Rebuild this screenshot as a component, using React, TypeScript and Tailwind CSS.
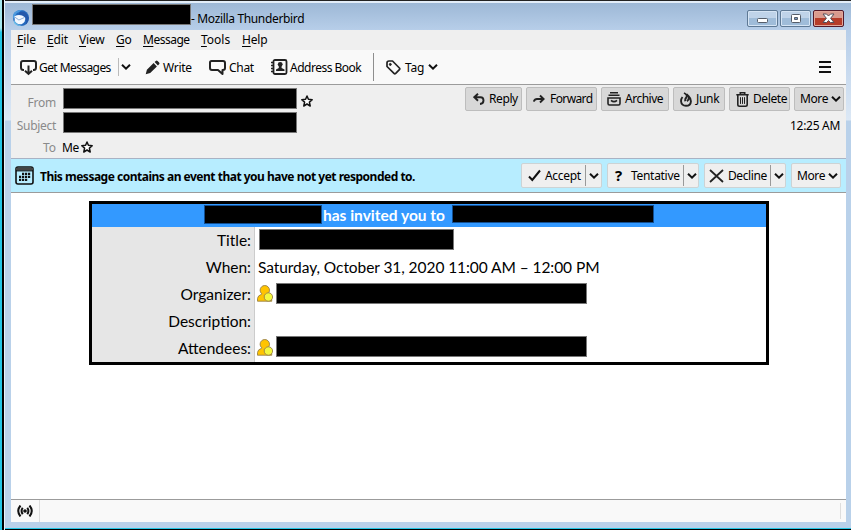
import React from "react";

function Label({ w, c = "", children }: { w: string; c?: string; children: React.ReactNode }) {
  return <span className={`block shrink-0 whitespace-nowrap ${w} ${c}`}>{children}</span>;
}

function Redacted({ c }: { c: string }) {
  return <span className={`block shrink-0 border border-[#777] bg-black ${c}`} />;
}

function Chevron({ c = "" }: { c?: string }) {
  return (
    <svg className={`shrink-0 ${c}`} width="10" height="8" viewBox="0 0 10 8" fill="none" stroke="#111" strokeWidth="2">
      <path d="M1 1.8 5 5.6 9 1.8" />
    </svg>
  );
}

function Star({ c = "" }: { c?: string }) {
  return (
    <svg className={`shrink-0 ${c}`} width="12" height="12" viewBox="0 0 12 12" fill="#fff" stroke="#111" strokeWidth="1.5" strokeLinejoin="round">
      <path d="M6 1 7.4 4.3 11.2 4.7 8.4 7.1 9.2 11 6 9 2.8 11 3.6 7.1.8 4.7 4.6 4.3Z" />
    </svg>
  );
}

function Contact() {
  return (
    <svg className="shrink-0" width="16" height="17" viewBox="0 0 16 17" stroke="#98814a" strokeWidth=".9">
      <path d="M.5 16.2V13.5Q.8 10.5 4.5 9.3H11Q14.5 10.5 14.8 16.2Z" fill="#ffc400" />
      <circle cx="7.8" cy="5.2" r="4.7" fill="#ffc400" />
      <path d="M5 9.3H10.6" stroke="#ffc400" strokeWidth="1.6" />
      <circle cx="11.4" cy="12" r="4.2" fill="#f3f83f" />
    </svg>
  );
}

function Thunderbird() {
  return (
    <svg className="ml-[2px] shrink-0" width="18" height="18" viewBox="0 0 18 18">
      <circle cx="9" cy="9" r="8" fill="#2469bd" />
      <path d="M1 10Q0 4 4.5 2Q8 .2 11 1.4Q8 1.3 7 3.2Q3.5 4 3 8Z" fill="#4c9adf" />
      <path d="M2.5 7.2Q8 4.5 13.2 8.2Q14 13 9.5 15.2Q5 15.8 2.8 12.2Z" fill="#f3f8ff" />
      <path d="M3 8.2 6.9 11 12.6 8.4" fill="none" stroke="#8fb0d8" />
      <path d="M7 3.8Q10 1.8 14 4L16.7 8.5Q16.5 13.5 13.5 15.7Q15 11 13.1 8.2Q10.5 5.2 7 5.4Z" fill="#2458aa" />
      <path d="M2 11Q4.5 16 10 16.5Q5 18 2 14Z" fill="#67bce9" />
    </svg>
  );
}

function TitleBar() {
  const btn = "flex h-[17px] items-center justify-center rounded-[2px] border border-[#5e7995] shadow-[inset_0_0_0_1px_#d5e4f4]";
  return (
    <div className="flex h-[27px] shrink-0 bg-linear-to-b from-[#9db8d6] to-[#b7cee9] pl-[5px] text-[12px]">
      <div className="flex pt-[6px]"><Thunderbird /></div>
      <Redacted c="ml-[2px] mt-[1px] h-[21px] w-[159px]" />
      <Label w="w-[117px]" c="mt-[7px] leading-[18px] tracking-[-0.34px]">- Mozilla Thunderbird</Label>
      <div className="ml-auto mt-[7px] mr-[7px] flex gap-[2px]">
        <span className={`${btn} w-[31px] bg-linear-to-b from-[#bfd3e9] from-50% to-[#9fbcd9] to-50%`}>
          <svg className="mt-[3px]" width="13" height="7" viewBox="0 0 13 7"><rect x="1.5" y="1.5" width="10" height="4" rx="1" fill="#fff" stroke="#555d69" /></svg>
        </span>
        <span className={`${btn} w-[31px] bg-linear-to-b from-[#bfd3e9] from-50% to-[#9fbcd9] to-50%`}>
          <svg width="12" height="10" viewBox="0 0 12 10"><rect x="1.5" y=".5" width="9" height="8" rx="1" fill="#fff" stroke="#555d69" /><path d="M4.5 3.5h3v2h-3z" fill="#7698c2" stroke="#555d69" /></svg>
        </span>
        <span className="flex h-[17px] w-[31px] items-center justify-center rounded-[2px] border border-[#53192a] bg-linear-to-b from-[#d99a8e] from-50% to-[#b63c29] to-50% shadow-[inset_0_0_0_1px_#e2a79a]">
          <svg width="13" height="11" viewBox="0 0 13 11"><path d="M1 1h3.5L6.5 3 8.5 1H12L8.6 5.3 12 9.5H8.5l-2-2-2 2H1l3.4-4.2Z" fill="#fff" stroke="#54505b" /></svg>
        </span>
      </div>
    </div>
  );
}

function MenuBar() {
  const items: [string, string, string][] = [
    ["File", "w-[30px]", "tracking-[-0.1px]"], ["Edit", "w-[32px]", "tracking-[-0.1px]"], ["View", "w-[37px]", "tracking-[-0.2px]"], ["Go", "w-[27px]", "tracking-[-0.3px]"],
    ["Message", "w-[58px]", "tracking-[-0.5px]"], ["Tools", "w-[41px]", "tracking-[0px]"], ["Help", "w-[30px]", "tracking-[-0.2px]"],
  ];
  return (
    <div className="flex h-[20px] shrink-0 bg-[#efefef] pl-[6px] leading-[20px]">
      {items.map(([t, w, k]) => (
        <Label key={t} w={w} c={k}><span className="underline underline-offset-2">{t[0]}</span>{t.slice(1)}</Label>
      ))}
    </div>
  );
}

function Toolbar() {
  return (
    <div className="flex h-[35px] shrink-0 items-center border-b border-[#9b9b9b] bg-[#f9f9f9] pl-[9px]">
      <svg className="shrink-0" width="17" height="17" viewBox="0 0 17 17" fill="none" stroke="#222" strokeWidth="2">
        <path d="M4 11H3.5Q1 11 1 8.5V4Q1 2 3 2H14Q16 2 16 4V8.5Q16 11 13.5 11H13M8.5 6.5V15M5 11.7 8.5 15 12 11.7" />
      </svg>
      <Label w="w-[74px]" c="ml-[2px] pt-[2px] tracking-[-0.58px]">Get Messages</Label>
      <span className="ml-[5px] h-[18px] w-px bg-[#bbb]" />
      <Chevron c="ml-[2px]" />
      <svg className="ml-[14px] shrink-0" width="15" height="15" viewBox="0 0 15 15" fill="#222">
        <path d="M.7 14.3 1.9 9.8 8.6 3.1 11.9 6.4 5.2 13.1ZM9.6 2.1 10.8.9Q11.7 0 12.6.9L14.1 2.4Q15 3.3 14.1 4.2L12.9 5.4Z" />
      </svg>
      <Label w="w-[31px]" c="ml-[3px] pt-[2px] tracking-[-0.3px]">Write</Label>
      <svg className="ml-[15px] shrink-0" width="17" height="15" viewBox="0 0 17 15" fill="none" stroke="#222" strokeWidth="2" strokeLinejoin="round">
        <path d="M2.5 1H14Q16 1 16 3V8Q16 10 14 10H13.5V14L9 10H3Q1 10 1 8V2.5Q1 1 2.5 1Z" />
      </svg>
      <Label w="w-[27px]" c="ml-[3px] pt-[2px] tracking-[-0.3px]">Chat</Label>
      <svg className="ml-[15px] shrink-0" width="17" height="16" viewBox="0 0 17 16" fill="none" stroke="#222" strokeWidth="1.8">
        <rect x="2.5" y="1" width="13" height="14" rx="1.5" />
        <path d="M0 3.5h3M0 6.5h3M0 9.5h3M0 12.5h3" strokeWidth="1.5" />
        <circle cx="9.2" cy="5.3" r="2.4" fill="#222" stroke="none" />
        <path d="M5 12V10.5L7.8 9V6h2.8v3L13.5 10.5V12Z" fill="#222" stroke="none" />
      </svg>
      <Label w="w-[74px]" c="ml-[2px] pt-[2px] tracking-[-0.5px]">Address Book</Label>
      <span className="ml-[9px] h-[28px] w-px bg-[#8e8e8e]" />
      <svg className="ml-[12px] shrink-0" width="15" height="15" viewBox="0 0 15 15" fill="none" stroke="#222" strokeWidth="1.7" strokeLinejoin="round">
        <path d="M1 3Q1 1 3 1H6.5L13.4 8Q14.2 8.8 13.4 9.7L9.7 13.4Q8.8 14.2 8 13.4L1 6.5Z" />
        <circle cx="4.3" cy="4.4" r="1" fill="#222" strokeWidth="1" />
      </svg>
      <Label w="w-[20px]" c="ml-[4px] pt-[2px] tracking-[-0.2px]">Tag</Label>
      <Chevron c="ml-[3px]" />
      <svg className="ml-auto mr-[15px]" width="12" height="12" viewBox="0 0 12 12" fill="#111"><path d="M0 0h12v2H0zM0 5h12v2H0zM0 10h12v2H0z" /></svg>
    </div>
  );
}

function ActionIcon({ name }: { name: string }) {
  const p = { className: "shrink-0", fill: "none", stroke: "#222", strokeWidth: 1.9 };
  if (name === "Reply") return <svg {...p} width="12" height="12" viewBox="0 0 12 12"><path d="M5 .7 1.3 4.2 5 7.7M1.8 4.2H7.5Q10.5 4.2 10.5 7.5Q10.5 10.8 7 11" /></svg>;
  if (name === "Forward") return <svg {...p} width="12" height="12" viewBox="0 0 12 12"><path d="M7 2.5 10.6 6 7 9.5M10 6H4Q1.5 6 .8 8.6" /></svg>;
  if (name === "Archive") return <svg {...p} strokeWidth={1.6} width="14" height="14" viewBox="0 0 14 14"><path d="M3 .8h8M1.5 3.3h11M1 6H13V11.5Q13 13 11.5 13H2.5Q1 13 1 11.5ZM4 8.3Q7 11 10 8.3" /></svg>;
  if (name === "Junk") return <svg {...p} strokeWidth={1.9} width="12" height="15" viewBox="0 0 12 15"><path d="M4 1Q8 2.8 6.3 5.5Q4.8 7.2 5.3 9.3M2.5 5Q.8 7.2 1.1 9.5Q1.5 13.8 6 13.8Q10.7 13.8 10.9 9.5Q11 6.4 8.6 4.2Q9.5 7.7 7 9.3" /></svg>;
  return <svg {...p} strokeWidth={1.6} width="13" height="15" viewBox="0 0 13 15"><path d="M.3 2.8h12.4M4.3 2.5V.8h4.4v1.7M1.8 3V12.5Q1.8 14.2 3.5 14.2H9.5Q11.2 14.2 11.2 12.5V3" /><path d="M4.5 5.2v6.7M6.5 5.2v6.7M8.5 5.2v6.7" strokeWidth="1" /></svg>;
}

function MessageHeader() {
  const btn = "flex h-[24px] shrink-0 items-center rounded-[2px] border border-[#bdbdbd] bg-[#d8d8d8]";
  return (
    <div className="flex h-[74px] shrink-0 justify-between border-b border-[#a9b2c4] bg-[#efefef]">
      <div className="flex flex-col pt-[3px]">
        <div className="flex h-[24px]">
          <Label w="w-[45px]" c="pt-[6px] text-right leading-[18px] tracking-[-0.2px] text-[#8a8a8a]">From</Label>
          <Redacted c="ml-[7px] h-[21px] w-[234px]" />
          <Star c="ml-[4px] mt-[7px]" />
        </div>
        <div className="flex h-[24px]">
          <Label w="w-[45px]" c="pt-[5px] text-right leading-[18px] tracking-[-0.3px] text-[#8a8a8a]">Subject</Label>
          <Redacted c="ml-[7px] h-[21px] w-[234px]" />
        </div>
        <div className="flex h-[22px]">
          <Label w="w-[45px]" c="pt-[3px] text-right leading-[18px] text-[#8a8a8a]">To</Label>
          <Label w="w-[18px]" c="ml-[6px] pt-[3px] leading-[18px] tracking-[-0.5px]">Me</Label>
          <Star c="ml-px mt-[5px]" />
        </div>
      </div>
      <div className="flex flex-col pt-[2px] pr-[2px]">
        <div className="flex h-[25px] gap-[4px]">
          <div className={`${btn} w-[57px] pl-[7px]`}><ActionIcon name="Reply" /><Label w="w-[30px]" c="ml-[4px] tracking-[-0.4px]">Reply</Label></div>
          <div className={`${btn} w-[71px] pl-[6px]`}><ActionIcon name="Forward" /><Label w="w-[44px]" c="ml-[5px] tracking-[-0.6px]">Forward</Label></div>
          <div className={`${btn} w-[68px] pl-[5px]`}><ActionIcon name="Archive" /><Label w="w-[41px]" c="ml-[4px] tracking-[-0.5px]">Archive</Label></div>
          <div className={`${btn} w-[52px] pl-[6px]`}><ActionIcon name="Junk" /><Label w="w-[25px]" c="ml-[4px] tracking-[-0.3px]">Junk</Label></div>
          <div className={`${btn} w-[61px] pl-[6px]`}><ActionIcon name="Delete" /><Label w="w-[34px]" c="ml-[4px] tracking-[-0.4px]">Delete</Label></div>
          <div className={`${btn} w-[50px] pl-[5px]`}><Label w="w-[29px]" c="tracking-[-0.4px]">More</Label><Chevron c="ml-[2px]" /></div>
        </div>
        <Label w="w-[50px]" c="ml-auto mr-[4px] mt-[5px] leading-[18px] tracking-[-0.28px]">12:25 AM</Label>
      </div>
    </div>
  );
}

function InviteBar() {
  const btn = "flex h-[25px] shrink-0 items-center rounded-[2px] border border-[#ccd3d5] bg-[#efefef]";
  const sep = "h-[21px] w-px shrink-0 bg-[#999]";
  return (
    <div className="flex h-[34px] shrink-0 items-center border-b border-[#9b9b9b] bg-[#b7edff] pl-[4px]">
      <svg className="shrink-0" width="19" height="19" viewBox="0 0 19 19">
        <rect x="1" y="1" width="17" height="17" rx="2" fill="none" stroke="#111" strokeWidth="1.6" />
        <path d="M1 3h17" stroke="#444" strokeWidth="2.4" /><path d="M1 4.8h17" stroke="#111" strokeWidth="1.2" />
        <path d="M7 7.8h9M4 10.8h12M4 13.8h9" stroke="#111" strokeWidth="2.2" strokeDasharray="2.2 .8" />
      </svg>
      <Label w="w-[377px]" c="ml-[6px] pt-[2px] font-bold tracking-[-0.495px]">This message contains an event that you have not yet responded to.</Label>
      <div className="ml-auto mr-[5px] flex gap-[5px]">
        <div className={`${btn} w-[81px] pl-[6px]`}>
          <svg className="shrink-0" width="13" height="13" viewBox="0 0 13 13" fill="none" stroke="#111" strokeWidth="2"><path d="M1 7.5 4.3 11 12 1.5" /></svg>
          <Label w="w-[37px]" c="ml-[4px] tracking-[-0.3px]">Accept</Label><span className={`ml-[3px] ${sep}`} /><Chevron c="ml-[3px]" />
        </div>
        <div className={`${btn} w-[92px] pl-[7px]`}>
          <Label w="w-[9px]" c="text-[15px] font-bold">?</Label>
          <Label w="w-[49px]" c="ml-[7px] tracking-[-0.3px]">Tentative</Label><span className={`ml-[3px] ${sep}`} /><Chevron c="ml-[3px]" />
        </div>
        <div className={`${btn} w-[82px] pl-[4px]`}>
          <svg className="shrink-0" width="15" height="14" viewBox="0 0 15 14" fill="none" stroke="#222" strokeWidth="1.8"><path d="M1 1 14 13M14 1 1 13" /></svg>
          <Label w="w-[39px]" c="ml-[4px] tracking-[-0.4px]">Decline</Label><span className={`ml-[3px] ${sep}`} /><Chevron c="ml-[3px]" />
        </div>
        <div className={`${btn} w-[50px] pl-[5px]`}><Label w="w-[29px]" c="tracking-[-0.4px]">More</Label><Chevron c="ml-[2px]" /></div>
      </div>
    </div>
  );
}

function Invitation() {
  const rows = ["Title:", "When:", "Organizer:", "Description:", "Attendees:"];
  return (
    <div className="mt-[8px] ml-[78px] h-[164px] w-[680px] border-[3px] border-black font-[Lato,sans-serif] text-[15.5px]">
      <div className="flex h-[23px] bg-[#3399ff] pl-[112px] font-bold text-white">
        <span className="mt-px block h-[19px] w-[118px] border border-[#124f92] bg-black" />
        <Label w="w-[126px]" c="ml-px leading-[23px]">has invited you to</Label>
        <span className="ml-[3px] mt-px block h-[18px] w-[202px] border border-[#124f92] bg-black" />
      </div>
      <div className="flex h-[135px]">
        <div className="w-[163px] border-r border-[#ccc] bg-[#e6e6e6] pr-[3px] text-right">
          {rows.map((r) => <div key={r} className="h-[27px] leading-[27px]">{r}</div>)}
        </div>
        <div className="flex flex-col">
          <div className="flex h-[27px] pl-[4px] pt-[2px]"><Redacted c="h-[21px] w-[195px]" /></div>
          <Label w="w-[345px]" c="h-[27px] pl-[3px] leading-[27px] tracking-[-0.07px]">Saturday, October 31, 2020 11:00 AM – 12:00 PM</Label>
          <div className="flex h-[27px] items-start pl-[2px] pt-[2px]"><span className="mt-[2px]"><Contact /></span><Redacted c="ml-[3px] h-[21px] w-[311px]" /></div>
          <div className="h-[27px]" />
          <div className="flex h-[27px] items-start pl-[2px] pt-px"><span className="mt-[3px]"><Contact /></span><Redacted c="ml-[3px] h-[21px] w-[311px]" /></div>
        </div>
      </div>
    </div>
  );
}

export default function App() {
  return (
    <div className="flex h-[530px] w-[851px] overflow-hidden bg-[#b9d1ea] font-['Noto_Sans',sans-serif] text-[12px] text-black">
      <div className="w-[2px] bg-linear-to-b from-[#a5e8ef] from-[28px] to-[#23c5e4] to-[32px]" />
      <div className="w-[2px] bg-black" />
      <div className="w-px bg-[#e6f3fb]" />
      <div className="flex w-[846px] flex-col border-t border-[#222] bg-[linear-gradient(#b7cee9_30px,#dce8f5_119px,#b9d1ea_120px)]">
        <div className="h-[2px] shrink-0 bg-[#e2edf8]" />
        <TitleBar />
        <div className="ml-[6px] flex h-[492px] w-[835px] flex-col bg-white">
          <MenuBar />
          <Toolbar />
          <MessageHeader />
          <InviteBar />
          <div className="h-[306px]"><Invitation /></div>
          <div className="flex h-[23px] items-center border-t border-[#9b9b9b] bg-[#f9f9f9] pl-[6px]">
            <svg className="shrink-0" width="16" height="12" viewBox="0 0 16 12" fill="none" stroke="#111" strokeWidth="2"><path d="M3.5.5Q-1 6 3.5 11.5M5.7 2.7Q3.5 6 5.7 9.3M10.3 2.7Q12.5 6 10.3 9.3M12.5.5Q17 6 12.5 11.5" /><circle cx="8" cy="6" r="1.8" fill="#111" stroke="none" /></svg>
            <span className="ml-[6px] h-[22px] w-px bg-[#ddd]" />
            <span className="ml-auto mr-[5px] h-[16px] w-px bg-[#ddd]" />
          </div>
        </div>
        <div className="h-[6px] shrink-0" />
        <div className="h-px shrink-0 bg-[#23c5e4]" />
        <div className="h-px shrink-0 bg-black" />
      </div>
    </div>
  );
}
